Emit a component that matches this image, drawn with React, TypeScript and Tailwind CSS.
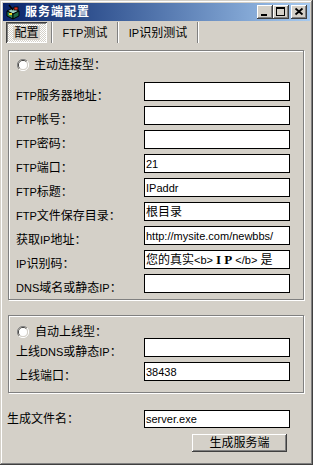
import React from 'react';

// split text into latin / cjk runs so latin can be a bit smaller
const T: React.FC<{ s: string }> = ({ s }) => (
  <>
    {s
      .split(/([\x20-\x7e]+)/)
      .filter(Boolean)
      .map((p, i) =>
        /^[\x20-\x7e]+$/.test(p) ? (
          <span key={i} className="text-[11px]">{p}</span>
        ) : (
          <span key={i}>{p}</span>
        )
      )}
  </>
);

const Radio = () => (
  <svg width="12" height="12" viewBox="0 0 12 12">
    <path d="M10 2A5.5 5.5 0 0 0 2 10" fill="none" stroke="#808080" strokeWidth="1" />
    <path d="M2 10A5.5 5.5 0 0 0 10 2" fill="none" stroke="#ffffff" strokeWidth="1" />
    <path d="M9.2 2.8A4.5 4.5 0 0 0 2.8 9.2" fill="none" stroke="#404040" strokeWidth="1" />
    <path d="M2.8 9.2A4.5 4.5 0 0 0 9.2 2.8" fill="none" stroke="#d4d0c8" strokeWidth="1" />
    <circle cx="6" cy="6" r="4" fill="#ffffff" />
  </svg>
);

const Field: React.FC<{ children?: React.ReactNode }> = ({ children }) => (
  <div className="w-[146px] h-[19px] border border-black bg-white pl-[1px] flex items-center overflow-hidden">
    <span className="whitespace-pre">{children}</span>
  </div>
);

const Row: React.FC<{ label: string; children?: React.ReactNode }> = ({ label, children }) => (
  <div className="h-[24px] flex pl-[7px]">
    <div className="w-[128px] pt-[7px] whitespace-nowrap">
      <T s={label} />
    </div>
    <Field>{children}</Field>
  </div>
);

const CapBtn: React.FC<{ children: React.ReactNode }> = ({ children }) => (
  <div className="w-[16px] h-[14px] bg-[#d4d0c8] shadow-[inset_-1px_-1px_0_#404040,inset_1px_1px_0_#ffffff,inset_-2px_-2px_0_#808080] flex items-center justify-center">
    {children}
  </div>
);

const mainRows: [string, React.ReactNode][] = [
  ['FTP服务器地址：', null],
  ['FTP帐号：', null],
  ['FTP密码：', null],
  ['FTP端口：', <T s="21" />],
  ['FTP标题：', <T s="IPaddr" />],
  ['FTP文件保存目录：', <T s="根目录" />],
  ['获取IP地址：', <T s="http://mysite.com/newbbs/" />],
  [
    'IP识别码：',
    <>
      <T s="您的真实<b> " />
      <span className="font-[family-name:'Liberation_Serif',serif] font-bold text-[13px]">I P</span>
      <T s=" </b> 是" />
    </>,
  ],
  ['DNS域名或静态IP：', null],
];

export default function App() {
  return (
    <div className="w-[313px] h-[465px] bg-[#d4d0c8] p-[3px] flex flex-col text-black text-[12px] leading-[14px] font-[family-name:'Liberation_Sans','Noto_Sans_CJK_SC',sans-serif] shadow-[inset_-1px_-1px_0_#404040,inset_1px_1px_0_#d4d0c8,inset_-2px_-2px_0_#808080,inset_2px_2px_0_#ffffff]">
      {/* title bar */}
      <div className="h-[18px] flex items-center bg-linear-to-r from-[#0a246a] to-[#a6caf0] pl-[2px] pr-[3px]">
        <svg width="16" height="16" viewBox="0 0 16 16">
          <path d="M2 7l6-3 6 3-6 3z" fill="#9ad0c0" stroke="#000" strokeWidth="1" />
          <path d="M2 7v5l6 3V10z" fill="#2e8b57" stroke="#000" strokeWidth="1" />
          <path d="M14 7v5l-6 3V10z" fill="#1f6b45" stroke="#000" strokeWidth="1" />
          <path d="M4 1l4 5" stroke="#000" strokeWidth="1.5" />
          <rect x="9" y="3" width="4" height="3" fill="#e03020" stroke="#000" strokeWidth="0.8" />
          <rect x="4" y="9" width="3" height="2" fill="#f0d020" />
        </svg>
        <span className="ml-[4px] text-white font-bold text-[12px] tracking-[1px]">服务端配置</span>
        <div className="ml-auto flex">
          <CapBtn>
            <svg width="16" height="14" viewBox="0 0 16 14">
              <rect x="4" y="9" width="6" height="2" fill="#000" />
            </svg>
          </CapBtn>
          <CapBtn>
            <svg width="16" height="14" viewBox="0 0 16 14">
              <rect x="3.5" y="2.5" width="8" height="8" fill="none" stroke="#000" />
              <rect x="3" y="2" width="9" height="2" fill="#000" />
            </svg>
          </CapBtn>
          <div className="ml-[2px]">
            <CapBtn>
              <svg width="16" height="14" viewBox="0 0 16 14">
                <path d="M4.5 3.5l7 6M11.5 3.5l-7 6" stroke="#000" strokeWidth="1.8" />
              </svg>
            </CapBtn>
          </div>
        </div>
      </div>

      {/* tabs */}
      <div className="mt-[1px] h-[21px] flex pl-[3px]">
        <div className="w-[41px] h-[21px] flex items-center justify-center bg-[repeating-conic-gradient(#ffffff_0_25%,#d4d0c8_0_50%)] bg-size-[2px_2px] shadow-[inset_1px_1px_0_#404040,inset_-1px_-1px_0_#ffffff,inset_2px_2px_0_#808080]">
          <span className="bg-[#d4d0c8] px-[1px]">配置</span>
        </div>
        <div className="ml-[4px] w-[2px] h-[21px] border-l border-[#808080] bg-white" />
        <div className="w-[64px] flex items-center justify-center">
          <span>
            <T s="FTP测试" />
          </span>
        </div>
        <div className="w-[2px] h-[21px] border-l border-[#808080] bg-white" />
        <div className="w-[78px] flex items-center justify-center">
          <span>
            <T s="IP识别测试" />
          </span>
        </div>
        <div className="w-[2px] h-[21px] border-l border-[#808080] bg-white" />
      </div>

      {/* group 1 */}
      <div className="ml-[5px] mt-[7px] w-[296px] h-[250px] border border-[#808080] shadow-[inset_1px_1px_0_#ffffff,1px_1px_0_#ffffff] flex flex-col">
        <div className="mt-[8px] ml-[8px] h-[12px] flex items-center gap-[5px]">
          <Radio />
          <span>主动连接型：</span>
        </div>
        <div className="mt-[11px] flex flex-col">
          {mainRows.map(([l, v]) => (
            <Row key={l} label={l}>
              {v}
            </Row>
          ))}
        </div>
      </div>

      {/* group 2 */}
      <div className="ml-[5px] mt-[15px] w-[296px] h-[78px] border border-[#808080] shadow-[inset_1px_1px_0_#ffffff,1px_1px_0_#ffffff] flex flex-col">
        <div className="mt-[10px] ml-[8px] h-[12px] flex items-center gap-[6px]">
          <Radio />
          <span>自动上线型：</span>
        </div>
        <div className="flex flex-col">
          <Row label="上线DNS或静态IP：" />
          <Row label="上线端口：">
            <T s="38438" />
          </Row>
        </div>
      </div>

      {/* bottom */}
      <div className="mt-[17px] h-[18px] flex items-center pl-[4px]">
        <div className="w-[137px]">生成文件名：</div>
        <div className="w-[146px] h-[18px] border border-black bg-white pl-[1px] flex items-center">
          <span>
            <T s="server.exe" />
          </span>
        </div>
      </div>
      <div className="mt-[6px] ml-[189px] w-[95px] h-[18px] flex items-center justify-center bg-[#d4d0c8] shadow-[inset_-1px_-1px_0_#404040,inset_1px_1px_0_#ffffff,inset_-2px_-2px_0_#808080]">
        生成服务端
      </div>
    </div>
  );
}
